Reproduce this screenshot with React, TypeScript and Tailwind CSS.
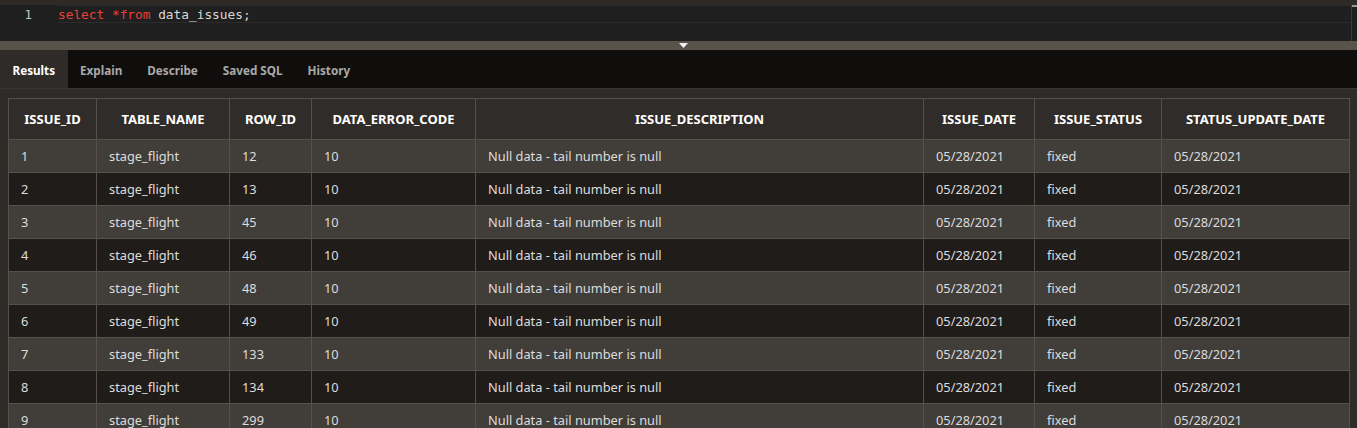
const columns = [
  { name: "ISSUE_ID", width: 88 },
  { name: "TABLE_NAME", width: 133 },
  { name: "ROW_ID", width: 82 },
  { name: "DATA_ERROR_CODE", width: 164 },
  { name: "ISSUE_DESCRIPTION", width: 448 },
  { name: "ISSUE_DATE", width: 111 },
  { name: "ISSUE_STATUS", width: 127 },
  { name: "STATUS_UPDATE_DATE", width: 188 },
];

const rowIds = [12, 13, 45, 46, 48, 49, 133, 134, 299];

const rows = rowIds.map((rowId, i) => [
  String(i + 1),
  "stage_flight",
  String(rowId),
  "10",
  "Null data - tail number is null",
  "05/28/2021",
  "fixed",
  "05/28/2021",
]);

const tabs = ["Results", "Explain", "Describe", "Saved SQL", "History"];

export default function App() {
  return (
    <div className="w-[1357px] h-[428px] overflow-hidden bg-[#2f2b28] font-['Noto_Sans',sans-serif]">
      {/* Editor */}
      <div className="h-[41px] pt-[5px] bg-[#2e2a27]">
        <div className="h-[36px] flex bg-[#1f1f1f]">
          <div className="w-[58px] shrink-0 flex justify-end pr-[26px] pt-[1px] font-['DejaVu_Sans_Mono',monospace] text-[12.5px] leading-[17px] text-[#c4c4c4]">
            1
          </div>
          <div className="flex-1 flex flex-col">
            <div className="h-[18px] border-t border-b border-[#2b2b2b] font-['DejaVu_Sans_Mono',monospace] text-[12.8px] leading-[17px] whitespace-pre">
              <span className="text-[#e8403a]">select *from</span>
              <span className="text-[#d6d6d6]"> data_issues;</span>
            </div>
            <div className="flex-1" />
          </div>
          <div className="w-[6px] shrink-0 border-l border-[#3a3a3a] flex flex-col">
            <div className="h-[2px] bg-[#9a9a9a]" />
          </div>
        </div>
      </div>

      {/* Splitter */}
      <div className="h-[9px] bg-[#59534c] flex justify-center items-start pt-[2px] pl-[9px]">
        <svg width="9" height="5" viewBox="0 0 9 5">
          <path d="M0 0 H9 L4.5 5 Z" fill="#f2f2f2" />
        </svg>
      </div>

      {/* Tabs */}
      <div className="h-[39px] flex bg-[#100e0c] border-b border-[#3a3633]">
        {tabs.map((tab, i) => (
          <div
            key={tab}
            className={
              i === 0
                ? "px-[12.5px] pt-[3px] flex items-center text-[11.7px] font-bold text-white bg-[#2f2b28]"
                : "px-[12.5px] pt-[3px] flex items-center text-[11.7px] font-bold text-[#a9a9a9]"
            }
          >
            {tab}
          </div>
        ))}
      </div>

      {/* Results grid */}
      <div className="pl-[8px] pt-[9px]">
        <table className="table-fixed border-collapse w-[1342px] text-[12.8px]">
          <colgroup>
            {columns.map((c) => (
              <col key={c.name} style={{ width: c.width }} />
            ))}
          </colgroup>
          <thead>
            <tr className="h-[41px] bg-[#302c29]">
              {columns.map((c) => (
                <th
                  key={c.name}
                  className="border border-[#55504b] pt-[2px] text-center text-[13px] font-bold text-white"
                >
                  {c.name}
                </th>
              ))}
            </tr>
          </thead>
          <tbody>
            {rows.map((row, i) => (
              <tr
                key={i}
                className={i % 2 === 0 ? "h-[33px] bg-[#413d39]" : "h-[33px] bg-[#201c1a]"}
              >
                {row.map((cell, j) => (
                  <td
                    key={j}
                    className="border border-[#55504b] px-[12px] pt-[2px] text-left text-[#dcdcdc]"
                  >
                    {cell}
                  </td>
                ))}
              </tr>
            ))}
          </tbody>
        </table>
      </div>
    </div>
  );
}
